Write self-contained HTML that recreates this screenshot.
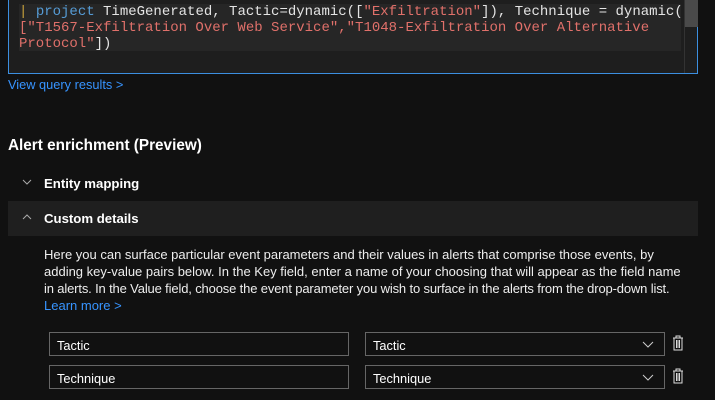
<!DOCTYPE html>
<html><head><meta charset="utf-8"><style>
*{margin:0;padding:0;box-sizing:border-box}
body{width:715px;height:400px;background:#111111;color:#fff;font-family:"Liberation Sans",sans-serif;position:relative;overflow:hidden}
.ed{position:absolute;left:8px;top:-2px;width:690px;height:76px;border:1px solid #3c8fe0;background:#1e1e1e}
.code{position:absolute;left:10px;font-family:"Liberation Mono",monospace;font-size:14px;color:#e4e4e4;white-space:pre;line-height:16px}
.s{color:#e0706a}.k{color:#569cd6}
.sel{position:absolute;background:#2a2a2a}
.sb{position:absolute;left:675px;top:0;width:14px;height:74px;border-left:1px solid #333}
.a{color:#3794ff;font-size:12.8px;position:absolute}
.h{position:absolute;left:8px;top:137px;font-size:15.3px;font-weight:bold}
.row{position:absolute;left:8px;width:690px;height:35px;font-size:13.2px;font-weight:bold}
.row span{position:absolute;left:36px;top:10px}
.chev{position:absolute;left:14px;top:11px;width:10px;height:10px}
p{position:absolute;left:44px;top:246px;width:660px;font-size:13px;line-height:17px;color:#eee;white-space:nowrap}
.in{position:absolute;height:24px;border:1px solid #666;background:#111;font-size:12.8px;padding:5px 0 0 7px}
</style></head><body>
<div class="ed">
<div class="sel" style="left:10px;top:5px;width:662px;height:47px;background:#262626"></div>
<div class="code" style="top:5px"><span style="color:#c8a23b">|</span> <span class="k">project</span> TimeGenerated, Tactic=dynamic([<span class="s">"Exfiltration"</span>]), Technique = dynamic(
<span class="s">["T1567-Exfiltration Over Web Service","T1048-Exfiltration Over Alternative</span>
<span class="s">Protocol"</span>])</div>
<div class="sb"><div style="background:#4a4a4a;height:28px;width:13px"></div></div>
</div>
<div class="a" style="left:8px;top:77px">View query results &gt;</div>
<div class="h">Alert enrichment (Preview)</div>
<div class="row" style="top:166px"><svg class="chev" viewBox="0 0 10 10"><path d="M1 3l4 4 4-4" stroke="#aaa" fill="none"/></svg><span>Entity mapping</span></div>
<div class="row" style="top:201px;background:#1f1f1f"><svg class="chev" viewBox="0 0 10 10"><path d="M1 7l4-4 4 4" stroke="#aaa" fill="none"/></svg><span>Custom details</span></div>
<p>Here you can surface particular event parameters and their values in alerts that comprise those events, by<br>adding key-value pairs below. In the Key field, enter a name of your choosing that will appear as the field name<br><span style="letter-spacing:-0.15px">in alerts. In the Value field, choose the event parameter you wish to surface in the alerts from the drop-down list.</span><br><span style="color:#3794ff">Learn more &gt;</span></p>
<div class="in" style="left:49px;top:332px;width:300px">Tactic</div>
<div class="in" style="left:365px;top:332px;width:300px">Tactic<svg style="position:absolute;right:10px;top:8px" width="12" height="8" viewBox="0 0 12 8"><path d="M1 1l5 5 5-5" stroke="#ccc" fill="none"/></svg></div>
<div class="in" style="left:49px;top:365px;width:300px">Technique</div>
<div class="in" style="left:365px;top:365px;width:300px">Technique<svg style="position:absolute;right:10px;top:8px" width="12" height="8" viewBox="0 0 12 8"><path d="M1 1l5 5 5-5" stroke="#ccc" fill="none"/></svg></div>
<svg style="position:absolute;left:671px;top:335px" width="14" height="16" viewBox="0 0 14 16"><path d="M2 3h10M5 3V1h4v2M3 3v12h8V3M5.5 5v8M7 5v8M8.5 5v8" stroke="#ddd" fill="none"/></svg>
<svg style="position:absolute;left:671px;top:368px" width="14" height="16" viewBox="0 0 14 16"><path d="M2 3h10M5 3V1h4v2M3 3v12h8V3M5.5 5v8M7 5v8M8.5 5v8" stroke="#ddd" fill="none"/></svg>
</body></html>
